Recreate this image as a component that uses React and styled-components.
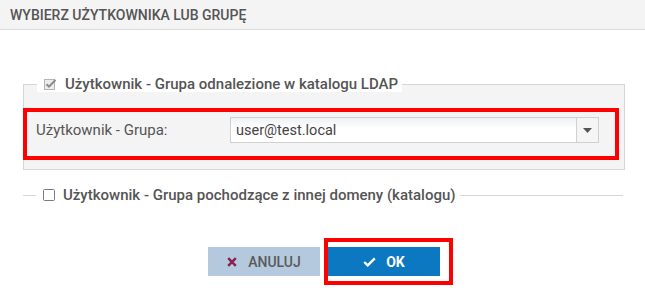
import React from "react";
import styled, { createGlobalStyle } from "styled-components";

const GlobalStyle = createGlobalStyle`
  html, body {
    margin: 0;
    padding: 0;
    background: #ffffff;
    font-family: Roboto, "Noto Sans", sans-serif;
    color: #555;
  }
`;

const Dialog = styled.div`
  width: 645px;
  height: 291px;
  background: #fff;
  overflow: hidden;
`;

const Header = styled.div`
  height: 29px;
  border-bottom: 1px solid #dcdcdc;
  background: #f4f4f4;
  display: flex;
  align-items: center;
  padding-left: 10px;
  font-size: 14px;
  font-weight: 500;
  color: #555;
  text-transform: uppercase;
`;

const Body = styled.div`
  padding: 46px 20px 0 23px;
`;

const Group = styled.fieldset`
  margin: 0 ${(p) => (p.$open ? "2px" : "0")} 0 0;
  padding: ${(p) => (p.$open ? "0" : "16px 5px 9px 0")};
  border: 1px solid #d6d6d6;
  border-width: ${(p) => (p.$open ? "1px 0 0 0" : "1px")};
  background: ${(p) => (p.$open ? "transparent" : "#f4f4f4")};
  min-width: 0;
  & + & {
    margin-top: 17px;
  }
`;

const Legend = styled.legend`
  margin-left: 13px;
  padding: 0 4px 0 7px;
  display: flex;
  align-items: center;
  gap: 8px;
  height: 16px;
  font-size: 15px;
  font-weight: 500;
  color: #555;
  background: #fff;
`;

const Highlight = styled.div`
  border: 4px solid #ff0000;
  margin-left: -1px;
  padding: 5px 16px 13px 9px;
  display: flex;
  align-items: center;
`;

const Label = styled.label`
  flex: 0 0 194px;
  font-size: 15px;
  color: #555;
`;

const Select = styled.div`
  flex: 1;
  height: 24px;
  display: flex;
  border: 1px solid #d0d0d0;
  background: linear-gradient(#eef2f5, #ffffff 45%);
`;

const SelectValue = styled.div`
  flex: 1;
  display: flex;
  align-items: center;
  padding-left: 5px;
  font-size: 14.5px;
  color: #444;
`;

const SelectButton = styled.div`
  width: 21px;
  border-left: 1px solid #d0d0d0;
  background: #f5f5f5;
  display: flex;
  align-items: center;
  justify-content: center;
`;

const Footer = styled.div`
  display: flex;
  justify-content: center;
  gap: 8px;
  padding-left: 3px;
  margin-top: 44px;
`;

const Button = styled.button`
  width: 112px;
  height: 29px;
  border: none;
  display: flex;
  align-items: center;
  justify-content: center;
  gap: ${(p) => (p.$primary ? "10px" : "11px")};
  font-family: Roboto, sans-serif;
  font-size: 14px;
  font-weight: ${(p) => (p.$primary ? 700 : 500)};
  color: ${(p) => (p.$primary ? "#fff" : "#5a5a5a")};
  background: ${(p) => (p.$primary ? "#0b78c1" : "#b4c9dd")};
  padding: 0;
`;

const Marked = styled.span`
  position: relative;
  display: flex;
  &::after {
    content: "";
    position: absolute;
    top: -9px;
    right: -13px;
    bottom: -9px;
    left: -4px;
    border: 4px solid #ff0000;
    pointer-events: none;
  }
`;

function CheckedBox() {
  return (
    <svg width="13" height="12" viewBox="0 0 13 12">
      <rect x="0.5" y="1.5" width="10" height="10" fill="#ececec" stroke="#b5b5b5" />
      <path d="M2.5 6.2 L5 8.6 L11.5 2" fill="none" stroke="#8a8a8a" strokeWidth="2" />
    </svg>
  );
}

function EmptyBox() {
  return (
    <svg width="12" height="12" viewBox="0 0 12 12">
      <rect x="0.5" y="0.5" width="11" height="11" rx="1" fill="#fff" stroke="#7a7a7a" />
    </svg>
  );
}

export default function App() {
  return (
    <>
      <GlobalStyle />
      <Dialog>
        <Header>Wybierz użytkownika lub grupę</Header>
        <Body>
          <Group>
            <Legend>
              <CheckedBox />
              Użytkownik - Grupa odnalezione w katalogu LDAP
            </Legend>
            <Highlight>
              <Label>Użytkownik - Grupa:</Label>
              <Select>
                <SelectValue>user@test.local</SelectValue>
                <SelectButton>
                  <svg width="9" height="5" viewBox="0 0 9 5">
                    <path d="M0 0 H9 L4.5 5 Z" fill="#555" />
                  </svg>
                </SelectButton>
              </Select>
            </Highlight>
          </Group>
          <Group $open>
            <Legend>
              <EmptyBox />
              Użytkownik - Grupa pochodzące z innej domeny (katalogu)
            </Legend>
          </Group>
        </Body>
        <Footer>
          <Button>
            <svg width="10" height="10" viewBox="0 0 10 10">
              <path d="M1.2 1.2 L8.8 8.8 M8.8 1.2 L1.2 8.8" stroke="#8c1d52" strokeWidth="2.4" />
            </svg>
            ANULUJ
          </Button>
          <Marked>
            <Button $primary>
              <svg width="13" height="10" viewBox="0 0 13 10">
                <path d="M1.2 5 L4.7 8.4 L11.8 1.3" fill="none" stroke="#fff" strokeWidth="2.4" />
              </svg>
              OK
            </Button>
          </Marked>
        </Footer>
      </Dialog>
    </>
  );
}
